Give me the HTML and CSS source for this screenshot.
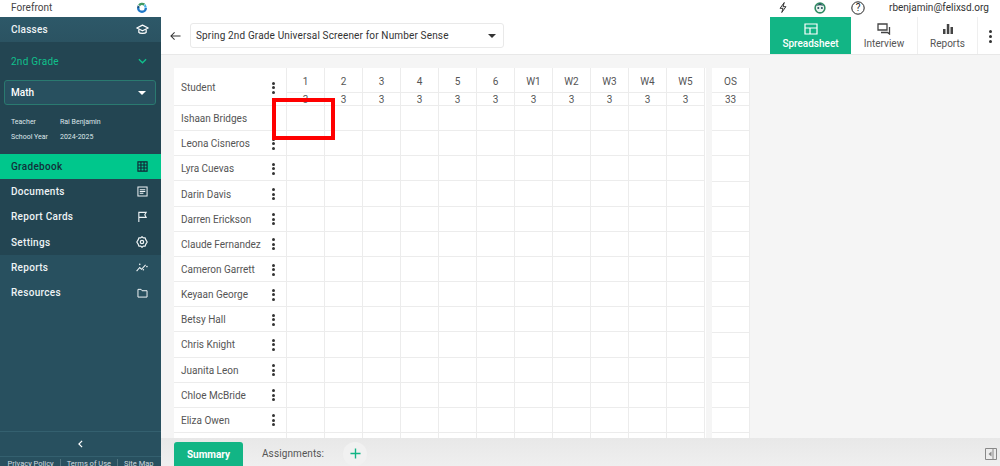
FILE: index.html
```html
<!DOCTYPE html>
<html lang="en">
<head>
<meta charset="utf-8">
<title>Forefront</title>
<link rel="stylesheet" href="styles.css">
</head>
<body>
<div class="app">
  <header class="topbar">
    <div class="brand"><span>Forefront</span>
      <svg class="logo" viewBox="0 0 12 12" width="12" height="12"><path d="M2.200 2.600A5 5 0 0 1 9 1.600L7.700 3.800A2.600 2.600 0 0 0 4 4.200z" fill="#3f9a63"/><path d="M1 6a5 5 0 0 0 10 0H8.600a2.600 2.600 0 0 1-5.200 0z" fill="#1f78c8"/><path d="M9.400 2 11 5.400 8.700 5.700 7.900 4z" fill="#49b4e8"/><path d="M1.700 3.200 3.700 4.700 3.300 6H1z" fill="#14507f"/></svg>
    </div>
    <div class="top-tools">
      <svg class="tool bolt" viewBox="0 0 12 14" width="10" height="13"><path d="M7.500 1 2.500 8H6l-1.500 5 5-7H6z" fill="none" stroke="#333" stroke-width="1.200" stroke-linejoin="round"/></svg>
      <svg class="tool face" viewBox="0 0 14 14" width="12" height="12"><circle cx="7" cy="7" r="5.700" fill="#e9f5ef" stroke="#2f8a62" stroke-width="1.800"/><circle cx="5" cy="7" r="1.200" fill="#2a4f5f"/><circle cx="9.200" cy="7" r="1.200" fill="#2a4f5f"/><path d="M2.500 4.500 7 1.500 11.500 4.500 7 3.800z" fill="#2a4f5f"/></svg>
      <svg class="tool help" viewBox="0 0 14 14" width="14" height="14"><circle cx="7" cy="7" r="6.200" fill="none" stroke="#222" stroke-width="1"/><text x="7" y="10.300" text-anchor="middle" class="help-q">?</text></svg>
      <span class="email">rbenjamin@felixsd.org</span>
    </div>
  </header>
  <div class="body-row">
    <aside class="sidebar">
      <div class="classes"><span>Classes</span>
        <svg viewBox="0 0 16 14" width="13" height="12"><path d="M8 1 1 4.500 8 8l7-3.500z" fill="none" stroke="#fff" stroke-width="1.500" stroke-linejoin="round"/><path d="M3.500 6.500V10c1 1.500 8 1.500 9 0V6.500" fill="none" stroke="#fff" stroke-width="1.500"/></svg>
      </div>
      <div class="side-dark">
        <div class="grade"><span>2nd Grade</span>
          <svg viewBox="0 0 10 6" width="9" height="6"><path d="M1 1l4 4 4-4" fill="none" stroke="#10c08c" stroke-width="1.500"/></svg>
        </div>
        <div class="subject"><span>Math</span><i class="caret caret-light"></i></div>
        <dl class="meta">
          <div class="meta-row"><dt>Teacher</dt><dd>Rai Benjamin</dd></div>
          <div class="meta-row"><dt>School Year</dt><dd>2024-2025</dd></div>
        </dl>
        <nav class="nav">
          <a class="nav-item active"><span>Gradebook</span>
            <svg viewBox="0 0 12 12" width="11" height="11"><path d="M1 1h10v10H1zM1 4.300h10M1 7.700h10M4.300 1v10M7.700 1v10" fill="none" stroke="#123" stroke-width="1.200"/></svg></a>
          <a class="nav-item"><span>Documents</span>
            <svg viewBox="0 0 12 12" width="11" height="11"><path d="M1 1h10v10H1zM3 4h6M3 6h6M3 8h4" fill="none" stroke="#eef3f5" stroke-width="1.100"/></svg></a>
          <a class="nav-item"><span>Report Cards</span>
            <svg viewBox="0 0 12 12" width="11" height="11"><path d="M2 12V1.500h8l-1.500 2.500L10 7H2" fill="none" stroke="#eef3f5" stroke-width="1.200"/></svg></a>
          <a class="nav-item"><span>Settings</span>
            <svg viewBox="0 0 12 12" width="12" height="12"><path d="M6 .7l1.300 1.200 1.900-.1.500 1.800L11.200 6l-1.500 2.400-.5 1.800-1.900-.1L6 11.300 4.700 10.100l-1.900.1-.5-1.800L.8 6l1.500-2.400.5-1.800 1.900.1z" fill="none" stroke="#eef3f5" stroke-width="1.200" stroke-linejoin="round"/><circle cx="6" cy="6" r="1.700" fill="none" stroke="#eef3f5" stroke-width="1.200"/></svg></a>
        </nav>
      </div>
      <div class="side-light">
        <a class="nav-item"><span>Reports</span>
          <svg viewBox="0 0 13 10" width="12" height="9"><path d="M.5 9 4 5l2 2 4.500-5" fill="none" stroke="#eef3f5" stroke-width="1.200"/><circle cx="4" cy="1.500" r=".9" fill="#eef3f5"/><circle cx="8" cy="7.500" r=".9" fill="#eef3f5"/><circle cx="12" cy="4" r=".9" fill="#eef3f5"/></svg></a>
        <a class="nav-item"><span>Resources</span>
          <svg viewBox="0 0 12 11" width="11" height="10"><path d="M1 1.500h3.500l1 1.500H11v7H1z" fill="none" stroke="#eef3f5" stroke-width="1.100"/></svg></a>
      </div>
      <div class="side-foot">
        <div class="collapse"><svg viewBox="0 0 6 10" width="5" height="8"><path d="M5 1 1 5l4 4" fill="none" stroke="#fff" stroke-width="1.500"/></svg></div>
        <div class="legal"><a>Privacy Policy</a><a>Terms of Use</a><a>Site Map</a></div>
      </div>
    </aside>
    <main class="main">
      <div class="subbar">
        <svg class="back" viewBox="0 0 12 10" width="11" height="10"><path d="M11.500 5H1M5 1 1 5l4 4" fill="none" stroke="#333" stroke-width="1.100"/></svg>
        <div class="screener"><span>Spring 2nd Grade Universal Screener for Number Sense</span><i class="caret"></i></div>
        <div class="views">
          <a class="view view-on">
            <svg viewBox="0 0 14 12" width="14" height="12"><path d="M1 1h12v10H1zM1 5h12M6 5v6" fill="none" stroke="#fff" stroke-width="1.200"/></svg>
            <span>Spreadsheet</span></a>
          <a class="view view-interview">
            <svg viewBox="0 0 14 12" width="14" height="12"><path d="M1 1h9v6H1zM12.500 4v7l-2-1.500H4" fill="none" stroke="#444" stroke-width="1.300"/></svg>
            <span>Interview</span></a>
          <a class="view view-reports">
            <svg viewBox="0 0 12 12" width="12" height="12"><path d="M1 6h2.500v5H1zM4.800 1h2.500v10H4.800zM8.500 4H11v7H8.500z" fill="#444"/></svg>
            <span>Reports</span></a>
          <div class="more"><i></i><i></i><i></i></div>
        </div>
      </div>
      <div class="sheet-area">
        <div class="sheet">
          <div class="grid">
            <div class="cell student-head"><span>Student</span><div class="kebab"><i></i><i></i><i></i></div></div>
            <div class="cell q">1</div><div class="cell q">2</div><div class="cell q">3</div><div class="cell q">4</div><div class="cell q">5</div><div class="cell q">6</div><div class="cell q">W1</div><div class="cell q">W2</div><div class="cell q">W3</div><div class="cell q">W4</div><div class="cell q">W5</div>
            <div class="cell pts">3</div><div class="cell pts">3</div><div class="cell pts">3</div><div class="cell pts">3</div><div class="cell pts">3</div><div class="cell pts">3</div><div class="cell pts">3</div><div class="cell pts">3</div><div class="cell pts">3</div><div class="cell pts">3</div><div class="cell pts">3</div>
            <div class="cell student"><span>Ishaan Bridges</span></div><div class="blanks"></div>
            <div class="cell student"><span>Leona Cisneros</span><div class="kebab"><i></i><i></i><i></i></div></div><div class="blanks"></div>
            <div class="cell student"><span>Lyra Cuevas</span><div class="kebab"><i></i><i></i><i></i></div></div><div class="blanks"></div>
            <div class="cell student"><span>Darin Davis</span><div class="kebab"><i></i><i></i><i></i></div></div><div class="blanks"></div>
            <div class="cell student"><span>Darren Erickson</span><div class="kebab"><i></i><i></i><i></i></div></div><div class="blanks"></div>
            <div class="cell student"><span>Claude Fernandez</span><div class="kebab"><i></i><i></i><i></i></div></div><div class="blanks"></div>
            <div class="cell student"><span>Cameron Garrett</span><div class="kebab"><i></i><i></i><i></i></div></div><div class="blanks"></div>
            <div class="cell student"><span>Keyaan George</span><div class="kebab"><i></i><i></i><i></i></div></div><div class="blanks"></div>
            <div class="cell student"><span>Betsy Hall</span><div class="kebab"><i></i><i></i><i></i></div></div><div class="blanks"></div>
            <div class="cell student"><span>Chris Knight</span><div class="kebab"><i></i><i></i><i></i></div></div><div class="blanks"></div>
            <div class="cell student"><span>Juanita Leon</span><div class="kebab"><i></i><i></i><i></i></div></div><div class="blanks"></div>
            <div class="cell student"><span>Chloe McBride</span><div class="kebab"><i></i><i></i><i></i></div></div><div class="blanks"></div>
            <div class="cell student"><span>Eliza Owen</span><div class="kebab"><i></i><i></i><i></i></div></div><div class="blanks"></div>
            <div class="cell student"></div><div class="blanks"></div>
          </div>
          <div class="grid-os">
            <div class="cell q">OS</div>
            <div class="cell pts">33</div>
            <div class="os-rows"></div>
          </div>
          <div class="marker"></div>
        </div>
      </div>
      <div class="tabs">
        <a class="summary">Summary</a>
        <span class="assign">Assignments:</span>
        <span class="add"><svg viewBox="0 0 12 12" width="11" height="11"><path d="M6 .5v11M.5 6h11" stroke="#12b585" stroke-width="1.500"/></svg></span>
        <svg class="panel" viewBox="0 0 12 12" width="12" height="12"><path d="M.5.500h11v11H.500zM8 .5v11" fill="none" stroke="#888" stroke-width="1"/><path d="M6.500 3.500v5L3.500 6z" fill="#888"/></svg>
      </div>
    </main>
  </div>
</div>
</body>
</html>
```
FILE: styles.css
```css
* { box-sizing: border-box; }
html, body { margin: 0; height: 100%; overflow: hidden; }
body { font-family: Roboto, "Liberation Sans", sans-serif; color: #444; background: #f5f5f5; }
a { display: block; }
dl, dd { margin: 0; }

.app { display: flex; flex-direction: column; height: 466px; }

.topbar { display: flex; height: 17px; background: #fff; flex: none; }
.brand { width: 161px; display: flex; align-items: center; justify-content: space-between; padding: 0 13px 2px 11px; font-size: 10px; letter-spacing: .05px; color: #444; }
.top-tools { flex: 1; display: flex; align-items: center; padding-bottom: 2px; }
.tool { flex: none; }
.bolt { margin-left: 617px; }
.face { margin-left: 26px; }
.help { margin-left: 25px; }
.help-q { font-size: 10px; fill: #222; font-family: Roboto, sans-serif; }
.email { margin-left: 24px; font-size: 10px; color: #333; white-space: nowrap; }

.body-row { flex: 1; display: flex; min-height: 0; }

.sidebar { width: 161px; flex: none; display: flex; flex-direction: column; background: #28505f; color: #eef3f5; }
.classes { height: 25px; display: flex; align-items: center; justify-content: space-between; padding: 0 12px 0 11px; font-size: 10px; font-weight: 500; letter-spacing: .25px; background: linear-gradient(#2d5868, #2b5362); }
.classes svg { flex: none; }
.side-dark { background: #234552; }
.grade { height: 38px; display: flex; align-items: center; justify-content: space-between; padding: 0 14px 0 11px; font-size: 10px; letter-spacing: .25px; color: #10c08c; }
.subject { height: 25px; margin: 0 5px 0 4px; border: 1px solid #2a7a70; border-radius: 3px; background: #28505f; display: flex; align-items: center; justify-content: space-between; padding: 0 9px 0 6px; font-size: 10px; font-weight: 500; color: #fff; }
.caret { display: block; width: 0; height: 0; border-left: 4px solid transparent; border-right: 4px solid transparent; border-top: 4px solid #333; }
.caret-light { border-top-color: #fff; }
.meta { padding: 9px 0 0 11px; height: 49px; font-size: 7px; color: #dfe7ea; }
.meta-row { display: flex; height: 15px; align-items: center; }
.meta-row dt { width: 49px; }

.nav-item { height: 25.2px; display: flex; align-items: center; justify-content: space-between; padding: 0 13px 0 11px; font-size: 10px; font-weight: 500; letter-spacing: .3px; color: #eef3f5; }
.nav-item svg { flex: none; }
.nav-item.active { background: #00c78c; color: #12303a; }

.side-light { flex: 1; background: #28505f; }
.side-foot { flex: none; background: #28505f; }
.collapse { height: 26px; display: flex; align-items: center; justify-content: center; border-top: 1px solid #34606f; border-bottom: 1px solid #34606f; }
.legal { height: 9px; display: flex; justify-content: center; font-size: 7.500px; color: #cfdadf; line-height: 9px; padding-top: 2px; }
.legal a { padding: 0 6px; border-left: 1px solid #51747f; white-space: nowrap; }
.legal a:first-child { border-left: 0; }

.main { flex: 1; min-width: 0; display: flex; flex-direction: column; }
.subbar { height: 38px; flex: none; background: #fff; display: flex; align-items: center; border-bottom: 1px solid #e8e8e8; padding-left: 9px; }
.back { flex: none; }
.screener { width: 314px; height: 25px; margin-left: 9px; border: 1px solid #e9e9e9; border-radius: 3px; display: flex; align-items: center; justify-content: space-between; padding: 0 7px 0 5px; font-size: 10px; letter-spacing: .15px; color: #333; }
.views { margin-left: auto; display: flex; height: 100%; align-items: stretch; }
.view { display: flex; flex-direction: column; align-items: center; justify-content: center; gap: 3px; font-size: 10px; color: #555; border-right: 1px solid #efefef; padding-top: 1px; }
.view-on { width: 81px; background: #12b585; color: #fff; font-weight: 500; border-right: 0; }
.view-interview { width: 67px; }
.view-reports { width: 60px; }
.more { width: 22px; display: flex; flex-direction: column; align-items: center; justify-content: center; gap: 2px; padding: 2px 0 0 3px; }
.more i, .kebab i { display: block; width: 3px; height: 3px; border-radius: 50%; background: #333; }

.sheet-area { flex: 1; min-height: 0; overflow: hidden; padding: 13px 0 0 13px; background: #f5f5f5; }
.sheet { display: flex; gap: 6px; position: relative; align-items: flex-start; }
.grid { width: 532px; display: grid; grid-template-columns: 113px repeat(11, 38px); grid-template-rows: 25px 13px; grid-auto-rows: 25.17px; background: #fff; }
.grid-os { width: 38px; display: grid; grid-template-columns: 38px; grid-template-rows: 25px 13px 353px; background: #fff; }
.cell { border-right: 1px solid #ececec; border-bottom: 1px solid #ececec; font-size: 10px; color: #555; display: flex; align-items: center; justify-content: center; min-width: 0; }
.blanks { grid-column: span 11; border-bottom: 1px solid #ececec; background: repeating-linear-gradient(90deg, transparent 0 37px, #ececec 37px 38px); }
.os-rows { border-right: 1px solid #ececec; background: repeating-linear-gradient(180deg, transparent 0 24.170px, #ececec 24.170px 25.170px); }
.student-head { grid-row: span 2; justify-content: space-between; padding: 2px 11px 0 7px; }
.student { justify-content: space-between; padding: 1px 11px 0 7px; white-space: nowrap; }
.kebab { display: flex; flex-direction: column; gap: 1.500px; flex: none; }
.q { padding-top: 2px; }
.pts { line-height: 13px; }
.marker { position: absolute; left: 98px; top: 30px; width: 63px; height: 42px; border: 4px solid #ff0000; pointer-events: none; }

.tabs { height: 28px; flex: none; background: linear-gradient(#e8e8e8, #efefef); display: flex; align-items: flex-end; padding-left: 13px; position: relative; }
.summary { width: 69px; height: 24px; border-radius: 3px 3px 0 0; background: #12b585; color: #fff; font-size: 10px; font-weight: 700; display: flex; align-items: center; justify-content: center; }
.assign { margin-left: 19px; align-self: center; font-size: 10px; letter-spacing: .1px; color: #555; padding-top: 3px; }
.add { width: 24px; height: 24px; margin-left: 19px; border-radius: 50%; background: #f1f1f1; display: flex; align-items: center; justify-content: center; align-self: center; margin-top: 3px; }
.panel { position: absolute; right: 3px; top: 10px; }
```
